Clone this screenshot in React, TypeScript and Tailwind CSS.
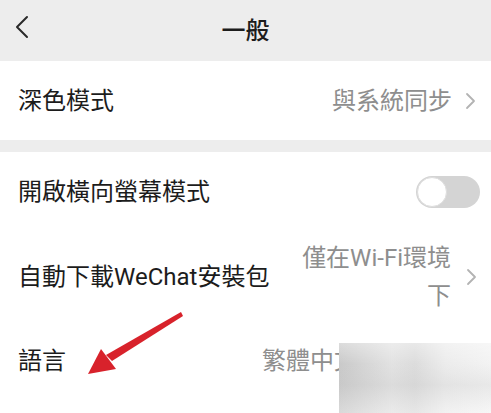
import React from 'react';

const Chevron = () => (
  <svg width="11" height="18" viewBox="0 0 11 18" fill="none" className="shrink-0">
    <path d="M2 2l7 7-7 7" stroke="#b3b3b3" strokeWidth="1.8" strokeLinecap="round" strokeLinejoin="round" />
  </svg>
);

const Toggle = () => (
  <div className="flex h-[32px] w-[64px] shrink-0 items-center rounded-full bg-[#d4d4d4] px-[1px]">
    <div className="h-[30px] w-[30px] rounded-full border border-[#dedede] bg-white" />
  </div>
);

export default function App() {
  return (
    <div className="relative h-[413px] w-[491px] overflow-hidden bg-[#ededed] font-['Roboto','Noto_Sans_CJK_TC',sans-serif] text-[24px] text-[#1c1c1c]">
      <header className="relative flex h-[61px] items-center justify-center">
        <svg width="14" height="24" viewBox="0 0 14 24" fill="none" className="absolute left-[15px] top-[15px]">
          <path d="M12 2L2 12l10 10" stroke="#2a2a2a" strokeWidth="2" strokeLinecap="round" strokeLinejoin="round" />
        </svg>
        <h1 className="font-medium leading-none">一般</h1>
      </header>

      <section className="bg-white">
        <div className="flex h-[79px] items-center pl-[18px] pr-[15px]">
          <span className="flex-1">深色模式</span>
          <span className="mr-[13px] text-[#8e8e8e]">與系統同步</span>
          <Chevron />
        </div>
      </section>

      <section className="mt-[12px] bg-white pb-[30px]">
        <div className="flex h-[80px] items-center pl-[18px] pr-[11px]">
          <span className="flex-1">開啟橫向螢幕模式</span>
          <Toggle />
        </div>
        <div className="flex h-[90px] items-center pl-[18px] pr-[14px]">
          <span className="flex-1 whitespace-nowrap">自動下載WeChat安裝包</span>
          <span className="mr-[15px] w-[150px] text-right leading-[38px] text-[#8e8e8e]">僅在Wi-Fi環境下</span>
          <Chevron />
        </div>
        <div className="flex h-[78px] items-center pl-[18px] pr-[14px]">
          <span className="w-[244px]">語言</span>
          <span className="text-[#8e8e8e]">繁體中文</span>
        </div>
      </section>

      <div className="absolute left-[339px] top-[343px] h-[70px] w-[152px] bg-[linear-gradient(90deg,#c9c9c9_0%,#d4d4d4_15%,#e2e2e2_35%,#dcdcdc_50%,#ececec_70%,#f3f3f3_100%)]">
        <div className="h-full w-full bg-[linear-gradient(180deg,rgba(255,255,255,0.35)_0%,rgba(255,255,255,0)_30%,rgba(200,200,200,0.25)_60%,rgba(255,255,255,0.3)_100%)]" />
      </div>

      <svg width="491" height="413" viewBox="0 0 491 413" className="pointer-events-none absolute left-0 top-0">
        <path d="M181 312L183 316L112 361L106 355Z" fill="#d8222b" />
        <path d="M88 374L101 349L116 369Z" fill="#d8222b" />
      </svg>
    </div>
  );
}
